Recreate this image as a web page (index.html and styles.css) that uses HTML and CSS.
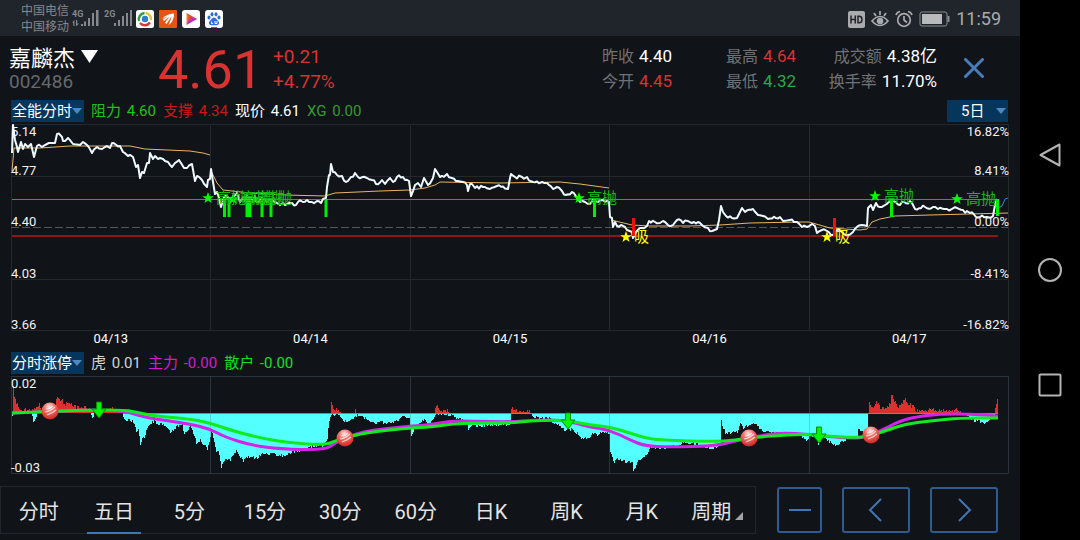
FILE: index.html
```html
<!DOCTYPE html>
<html lang="zh-CN">
<head>
<meta charset="utf-8">
<title>嘉麟杰 002486</title>
<link rel="stylesheet" href="styles.css">
</head>
<body>
<div class="device">
  <div class="app">
    <header class="status">
      <div class="carriers"><span>中国电信</span><span>中国移动</span></div>
      <svg class="signals" viewBox="0 0 60 22" aria-hidden="true">
        <g fill="#85888d">
          <text x="0" y="9" class="net">4G</text><text x="32" y="9" class="net">2G</text>
          <path d="M9 16h2v2H9zM12 13.500h2V18h-2zM16 10h2v8h-2zM20 5h2v13h-2zM24 2h2.500v16H24zM42 15h2v3h-2zM46 12h2v6h-2zM50 8h2v10h-2zM54 5h2v13h-2zM58 2h2v16h-2z"/>
          <path d="M0 14.500 2.500 12v6H1.300v-3.500zM4 12h1.200v3.500H7L4.500 18H4z"/>
        </g>
      </svg>
      <div class="tray">
        <svg class="tile" viewBox="0 0 18 18"><rect width="18" height="18" rx="2.500" fill="#fff"/><g fill="none" stroke-width="2.400"><path d="M3 11A6.300 6.300 0 0 1 8.500 3" stroke="#2f9a42"/><path d="M9.500 3a6.300 6.300 0 0 1 5.500 7" stroke="#e9c22c"/><path d="M14 12.500A6.300 6.300 0 0 1 4 13" stroke="#d53a3a"/></g><circle cx="9" cy="9" r="3.200" fill="#2b80c8"/></svg>
        <svg class="tile" viewBox="0 0 18 18"><rect width="18" height="18" rx="1" fill="#e85413"/><path d="M3 9Q7 4 15 3.500Q15.500 8 12 13L9.500 15Q12 10 12.500 6.500L7.500 14 6 12.500 10.500 6.500 5 11 4 9.500 9 6z" fill="#fff"/></svg>
        <svg class="tile" viewBox="0 0 18 18"><rect width="18" height="18" rx="3" fill="#fff"/><path d="M4.500 3 15 9 8 11.500z" fill="#f0442d"/><path d="M4.500 3 9 9.500 4.500 15z" fill="#ec7d24"/><path d="M4.500 15 8 7l7 2z" fill="#b22bd1"/><path d="M6 7l4.500 2L7 11z" fill="#f0442d"/></svg>
        <svg class="tile" viewBox="0 0 18 18"><rect width="18" height="18" rx="3" fill="#fff"/><g fill="#2d6be0"><ellipse cx="4" cy="7.500" rx="1.500" ry="2"/><ellipse cx="7" cy="4.300" rx="1.500" ry="2.100"/><ellipse cx="11" cy="4.300" rx="1.500" ry="2.100"/><ellipse cx="14" cy="7.500" rx="1.500" ry="2"/><path d="M9 7.500c2 0 3 2.500 4.500 3.800 1.200 1.700.3 3.900-1.700 3.900H6.200c-2 0-2.900-2.200-1.700-3.900C6 10 7 7.500 9 7.500z"/></g><path d="M6.500 11.500v2h1.500M10 11v2.500h2V11" fill="none" stroke="#fff"/><path d="M6 17h6v1H6z" fill="#d33"/></svg>
      </div>
      <div class="system">
        <svg class="hd" viewBox="0 0 17 17"><rect width="17" height="17" rx="2" fill="#a9abae"/><path d="M3 4.500v8M7.300 4.500v8M3 8.500h4.300M10 5.200v6.600h1.300c3.600 0 3.600-6.600 0-6.600z" fill="none" stroke="#20242b" stroke-width="1.500"/></svg>
        <svg class="eye" viewBox="0 0 18 18" fill="none" stroke="#a9abae" stroke-width="1.700"><path d="M1 11q8-9 16 0q-8 9-16 0zM9 1v4M3 3l2 3M15 3l-2 3"/><circle cx="9" cy="11" r="2.500" fill="#a9abae"/></svg>
        <svg class="alarm" viewBox="0 0 18 18" fill="none" stroke="#a9abae" stroke-width="1.700"><circle cx="9" cy="10" r="6.300"/><path d="M9 6v4l3 2.500M1 5q1-3 4-3.500M17 5q-1-3-4-3.500"/></svg>
        <svg class="battery" viewBox="0 0 32 16"><rect x="1" y="1" width="27" height="14" rx="2" fill="none" stroke="#8a8c90"/><rect x="3" y="3" width="20" height="10" fill="#b9babc"/><path d="M29.500 5v6" stroke="#8a8c90" stroke-width="2"/></svg>
        <time>11:59</time>
      </div>
    </header>

    <section class="quote">
      <div class="stock">
        <h1>嘉麟杰 <svg viewBox="0 0 17 13" aria-hidden="true"><path d="M0 0h17L8.500 13z" fill="#fff"/></svg></h1>
        <p>002486</p>
      </div>
      <strong class="price">4.61</strong>
      <div class="change"><span>+0.21</span><span>+4.77%</span></div>
      <dl class="stats">
        <div><dt>昨收</dt><dd>4.40</dd></div>
        <div><dt>最高</dt><dd class="up">4.64</dd></div>
        <div><dt>成交额</dt><dd>4.38亿</dd></div>
        <div><dt>今开</dt><dd class="up">4.45</dd></div>
        <div><dt>最低</dt><dd class="down">4.32</dd></div>
        <div><dt>换手率</dt><dd>11.70%</dd></div>
      </dl>
      <button class="close" aria-label="关闭"><svg viewBox="0 0 20 20"><path d="M1.500 1.500l17 17M18.500 1.500l-17 17" stroke="#477dbb" stroke-width="3" stroke-linecap="round"/></svg></button>
    </section>

    <div class="legend">
      <label class="picker"><select aria-label="主图指标"><option>全能分时</option></select><svg viewBox="0 0 10 6"><path d="M0 0h10L5 6z"/></svg></label>
      <span class="lime">阻力 <b>4.60</b></span><span class="red">支撑 <b>4.34</b></span><span class="white">现价 <b>4.61</b></span><span class="olive">XG <b>0.00</b></span>
      <label class="picker days"><select aria-label="天数"><option>5日</option></select><svg viewBox="0 0 10 6"><path d="M0 0h10L5 6z"/></svg></label>
    </div>

    <svg class="chart" viewBox="10 123 1000 209" role="img" aria-label="五日分时走势">
      <defs>
        <path id="star" d="M0-6 1.500-1.800H5.800L2.300 .8 3.600 5 0 2.400-3.600 5-2.300 .8-5.800-1.800H-1.500z"/>
      </defs>
      <path class="grid" d="M11.500 124.500h997v206h-997zM11.500 176.500h997M11.500 279.500h997M210.500 124.500v206M410.500 124.500v206M609.500 124.500v206M809.500 124.500v206"/>
      <path class="zero-dash" d="M11 227.500h997"/>
      <path class="resist" d="M12 199.500h986"/>
      <path class="support" d="M12 236h986"/>
      <g id="average"></g>
      <path id="price" class="price-line"/>
      <path class="tail" d="M998 208l4-2 3-7 3-1"/>
      <path class="sell-bars" d="M224.500 199v18M229 199v18M247 199v18M250 199v18M262 199v18M271 199v18M326 199v18M594.500 199v18M891.500 199v18M997.500 199v17"/>
      <path class="buy-bars" d="M633.500 218v18M834.500 218v18"/>
      <g class="sell">
        <use href="#star" x="208" y="198"/><use href="#star" x="233" y="199"/><use href="#star" x="247" y="198"/><use href="#star" x="255" y="199"/><use href="#star" x="579" y="198"/><use href="#star" x="875" y="196"/><use href="#star" x="957" y="199"/>
        <text x="216" y="203">高抛</text><text x="241" y="203">高抛</text><text x="255" y="203">高抛</text><text x="262" y="203">高抛</text>
        <text x="587" y="203">高抛</text><text x="884" y="201">高抛</text><text x="966" y="204">高抛</text>
      </g>
      <g class="buy">
        <use href="#star" x="626" y="237"/><use href="#star" x="827" y="237"/>
        <text x="634" y="242">吸</text><text x="835" y="242">吸</text>
      </g>
      <g class="axis">
        <text x="11" y="136">5.14</text><text x="11" y="175">4.77</text><text x="11" y="226">4.40</text><text x="11" y="278">4.03</text><text x="11" y="329">3.66</text>
        <g text-anchor="end"><text x="1009" y="136">16.82%</text><text x="1009" y="175">8.41%</text><text x="1009" y="226">0.00%</text><text x="1009" y="278">-8.41%</text><text x="1009" y="329">-16.82%</text></g>
      </g>
    </svg>
    <div class="dates"><span>04/13</span><span>04/14</span><span>04/15</span><span>04/16</span><span>04/17</span></div>

    <div class="legend second">
      <label class="picker"><select aria-label="副图指标"><option>分时涨停</option></select><svg viewBox="0 0 10 6"><path d="M0 0h10L5 6z"/></svg></label>
      <span class="pale">虎 <b>0.01</b></span><span class="magenta">主力 <b>-0.00</b></span><span class="bright">散户 <b>-0.00</b></span>
    </div>

    <svg class="chart" viewBox="10 375 1000 100" role="img" aria-label="分时涨停指标">
      <defs>
        <radialGradient id="ball" cx=".45" cy=".25" r=".75"><stop offset="0" stop-color="#ffe4de"/><stop offset=".4" stop-color="#ee736b"/><stop offset="1" stop-color="#d4211c"/></radialGradient>
        <g id="marker"><circle r="8.500" fill="url(#ball)"/><path d="M-5 1Q1 0 5-4M-3 4Q3 2 6-1M-4-2Q0-2 3-5" fill="none" stroke="#fff" stroke-width="1.200" opacity=".7"/></g>
        <path id="arrow" d="M-2.500-8h5v7H7L0 8-7-1h4.500z" fill="#00f500" stroke="#0a8a0a"/>
      </defs>
      <path id="outflow" fill="#54ffff"/>
      <path id="inflow" fill="#dc302e"/>
      <path class="grid over" d="M11.500 376.500h997v97h-997zM210.500 376.500v97M410.500 376.500v97M609.500 376.500v97M809.500 376.500v97"/>
      <path d="M123 413.500h875" stroke="#39a5a9"/>
      <path id="main-force" class="curve force"/>
      <path id="retail" class="curve retail"/>
      <use href="#marker" x="50" y="411"/><use href="#marker" x="345" y="438"/><use href="#marker" x="749" y="438"/><use href="#marker" x="871" y="435"/>
      <use href="#arrow" x="99" y="410"/><use href="#arrow" x="568" y="421"/><use href="#arrow" x="819" y="435"/>
      <g class="axis"><text x="11" y="388">0.02</text><text x="11" y="472">-0.03</text></g>
    </svg>

    <footer class="toolbar">
      <nav class="periods">
        <button>分时</button><button class="active">五日</button><button>5分</button><button>15分</button><button>30分</button><button>60分</button><button>日K</button><button>周K</button><button>月K</button><button>周期<svg viewBox="0 0 8 8" aria-hidden="true"><path d="M8 0v8H0z" fill="#a0a2a5"/></svg></button>
      </nav>
      <button class="tool small" aria-label="缩小"><svg viewBox="0 0 24 24"><path d="M1 12h22"/></svg></button>
      <button class="tool" aria-label="向前"><svg viewBox="0 0 24 24"><path d="M17 1 6 12l11 11"/></svg></button>
      <button class="tool" aria-label="向后"><svg viewBox="0 0 24 24"><path d="M7 1l11 11L7 23"/></svg></button>
    </footer>
  </div>

  <nav class="system-nav">
    <button aria-label="返回"><svg viewBox="0 0 26 26"><path d="M22.500 2.500v21L3.500 13z"/></svg></button>
    <button aria-label="主屏幕"><svg viewBox="0 0 26 26"><circle cx="13" cy="13" r="11"/></svg></button>
    <button aria-label="最近任务"><svg viewBox="0 0 26 26"><rect x="2.500" y="2.500" width="21" height="21" rx="1"/></svg></button>
  </nav>
</div>
<script src="chart.js"></script>
</body>
</html>
```
FILE: styles.css
```css
* { box-sizing: border-box; }
body {
  margin: 0;
  background: #000;
  color: #fff;
  font-family: Roboto, "Noto Sans CJK SC", sans-serif;
}
button, select { font: inherit; color: inherit; background: none; border: 0; padding: 0; margin: 0; }
svg { display: block; }
h1, p, dl, dd { margin: 0; }

.device { display: grid; grid-template-columns: 1fr 60px; min-height: 100vh; }
.app { background: #101318; display: flex; flex-direction: column; min-width: 0; }

.status { display: flex; align-items: center; height: 36px; background: #20242b; padding: 2px 19px 0 21px; color: #a9abae; }
.carriers { display: flex; flex-direction: column; font-size: 12px; line-height: 16px; color: #85888d; }
.signals { width: 60px; height: 22px; margin: 0 4px 0 3px; }
.net { font: 700 9px Roboto, sans-serif; }
.tray { display: flex; gap: 5px; }
.tile { width: 18px; height: 18px; }
.system { display: flex; align-items: center; gap: 6px; margin-left: auto; font-size: 18px; line-height: 20px; }
.hd { width: 17px; height: 17px; }
.eye, .alarm { width: 18px; height: 18px; }
.battery { width: 32px; height: 16px; }
.system time { margin-left: -1px; }

.quote { display: flex; align-items: center; height: 63px; padding: 0 36px 0 9px; }
.stock { width: 149px; }
.stock h1 { display: flex; align-items: center; gap: 6px; font-size: 22px; line-height: 26px; font-weight: 400; padding-top: 2px; }
.stock h1 svg { width: 17px; height: 13px; margin-bottom: 4px; }
.stock p { font-size: 19px; line-height: 20px; color: #66686c; }
.price { width: 115px; font-size: 54px; line-height: 60px; font-weight: 400; color: #da3230; padding-top: 5px; }
.change { display: flex; flex-direction: column; font-size: 19px; line-height: 25px; color: #da3230; padding-top: 3px; }
.stats { display: grid; grid-template-columns: 100px 78px 109px; column-gap: 24px; margin-left: auto; padding-top: 3px; }
.stats div { display: flex; gap: 5px; line-height: 25px; white-space: nowrap; }
.stats div:nth-child(3n) { justify-content: flex-end; }
.stats dt { font-size: 16px; color: #707276; }
.stats dd { font-size: 17px; }
.stats .up { color: #da3230; }
.stats .down { color: #2da54e; }
.close { margin-left: 27px; }
.close svg { width: 20px; height: 20px; }

.legend { display: flex; align-items: center; gap: 7px; height: 22px; margin: 1px 12px 1px 11px; font-size: 15px; line-height: 22px; }
.legend span { white-space: nowrap; }
.legend b { font-weight: 400; margin-left: 2px; }
.picker { position: relative; display: block; width: 73px; height: 22px; background: #07365c; }
.picker select { appearance: none; width: 100%; height: 22px; padding-left: 1px; line-height: 22px; color: #fff; }
.picker svg { position: absolute; right: 2px; top: 8px; width: 10px; height: 6px; fill: #4f87c0; pointer-events: none; }
.days { width: 61px; margin-left: auto; }
.days select { padding-left: 14px; }
.lime { color: #16c616; }
.red { color: #d01616; }
.olive { color: #359b2c; }
.pale { color: #d6d6d6; }
.magenta { color: #d41ad4; }
.bright { color: #10e020; }

.chart { width: calc(100% - 20px); margin: 0 10px; overflow: visible; }
.grid { fill: none; stroke: #24272c; stroke-width: 1; }
.over { stroke: #60718055; }
.zero-dash { stroke: #54575c; stroke-dasharray: 8 3; }
.resist { stroke: #12b812; stroke-width: 1; }
.support { stroke: #8f151b; stroke-width: 2; }
.average { fill: none; stroke: #e6b566; stroke-width: 1; }
.price-line { fill: none; stroke: #eefaff; stroke-width: 2; stroke-linejoin: round; }
.tail { fill: none; stroke: #2b8cc4; stroke-width: 1; }
.sell-bars { stroke: #00f000; stroke-width: 3; }
.buy-bars { stroke: #f01010; stroke-width: 3; }
.sell { fill: #00ff00; }
.sell text { fill: #16ba16; font-size: 15px; }
.buy { fill: #ffff00; font-size: 15px; }
.axis { fill: #f2f2f2; font-size: 13px; }
.curve { fill: none; stroke-width: 3; stroke-linejoin: round; }
.force { stroke: #d522e8; }
.retail { stroke: #10eb20; }

.dates { display: grid; grid-template-columns: repeat(5, 1fr); margin: 0 11px; text-align: center; font-size: 13px; line-height: 14px; }
.second { margin-top: 6px; }

.toolbar { display: flex; align-items: center; margin-top: 11px; padding-right: 22px; }
.periods { flex: 1; display: grid; grid-template-columns: repeat(10, 1fr); height: 48px; margin-right: 21px; border: 1px solid #23262e; }
.periods button { position: relative; display: flex; align-items: center; justify-content: center; padding-top: 3px; font-size: 20px; line-height: 42px; color: #e4e4e4; white-space: nowrap; }
.periods .active::after { content: ""; position: absolute; left: 11px; right: 11px; bottom: -1px; height: 2px; background: #3c78b8; }
.periods svg { width: 8px; height: 8px; margin: 8px 0 0 4px; }
.tool { display: grid; place-items: center; width: 68px; height: 46px; border: 2px solid #2e5b90; border-radius: 3px; }
.tool + .tool { margin-left: 20px; }
.tool svg { width: 24px; height: 24px; fill: none; stroke: #3f76b4; stroke-width: 2; }
.small { width: 45px; }

.system-nav { display: flex; flex-direction: column; align-items: center; justify-content: center; gap: 89px; background: #000; }
.system-nav svg { width: 26px; height: 26px; fill: none; stroke: #b4b4b4; stroke-width: 2; stroke-linejoin: round; }
```
FILE: chart.js
```js
const pairs = (text) => text.trim().split(/\s+/).map((p) => p.split(",").map(Number));
const line = (points) => "M" + points.map((p) => p.join(" ")).join("L");

let seed = 11;
const noise = () => {
  seed = (seed * 16807) % 2147483647;
  return seed / 2147483647 - 0.5;
};

const valueAt = (points, x) => {
  for (let i = 1; i < points.length; i++) {
    const [x0, y0] = points[i - 1];
    const [x1, y1] = points[i];
    if (x <= x1) return y0 + ((y1 - y0) * (x - x0)) / (x1 - x0 || 1);
  }
  return points[points.length - 1][1];
};

// Adds small ticks between widely spaced price samples.
const ticks = (points) => {
  const out = [];
  points.forEach((p, i) => {
    out.push(p);
    const next = points[i + 1];
    if (!next) return;
    const span = next[0] - p[0];
    for (let x = 2; x < span - 1; x += 2) {
      out.push([p[0] + x, +(p[1] + ((next[1] - p[1]) * x) / span + noise() * 3.5).toFixed(1)]);
    }
  });
  return out;
};

// Quadratic smoothing through the midpoints of the samples.
const smooth = (points) => {
  let d = "M" + points[0].join(" ");
  for (let i = 1; i < points.length - 1; i++) {
    const [x, y] = points[i];
    const [nx, ny] = points[i + 1];
    d += `Q${x} ${y} ${(x + nx) / 2} ${(y + ny) / 2}`;
  }
  return d + "L" + points[points.length - 1].join(" ");
};

const ZERO = 413;
const bars = (points, dir, jitter) => {
  let d = "";
  for (let x = points[0][0]; x < points[points.length - 1][0]; x++) {
    const h = (valueAt(points, x) - ZERO) * dir;
    if (h < 0.8) continue;
    const tall = Math.max(1, Math.round(h + noise() * jitter));
    d += dir > 0 ? `M${x} ${ZERO}h1v${tall}h-1z` : `M${x} ${ZERO}h1v${-tall}h-1z`;
  }
  return d;
};

const price = pairs(`12,153 13,125 15,140 17,147 18,152 21,142 23,149 25,144 28,147 31,144 34,157 37,146 42,147 47,144 52,143 55,143 57,134 62,137 63,141 68,138 73,144 80,145 83,142 87,145 92,153 97,147 102,149 105,147 110,148 112,143 120,146 123,152 128,156 133,157 136,167 138,165 140,178 142,172 144,173 147,163 149,163 150,153 153,159 155,156 158,159 163,159 168,162 172,167 175,163 179,160 184,168 187,168 192,164 195,181 197,176 202,180 207,187 208,180 210,179 211,169 213,182 215,194 217,192 219,198 221,207 224,197 230,199 233,197 237,193 240,202 243,198 247,200 252,199 257,202 262,198 267,202 272,200 277,203 280,205 283,203 287,204 292,203 296,205 298,202 303,202 307,200 312,202 317,201 321,203 323,199 326,198 327,187 329,175 330,175 331,164 333,172 337,175 342,176 346,182 351,177 355,173 358,177 367,178 372,180 376,184 382,180 385,184 390,178 393,182 397,177 403,177 409,181 411,196 415,185 418,183 421,187 424,178 428,185 433,178 435,169 437,172 440,177 447,174 452,178 458,181 463,182 467,185 468,191 470,184 475,188 483,187 490,189 497,186 508,189 510,178 511,174 515,177 522,177 527,177 533,182 542,182 547,183 553,189 557,187 562,191 566,195 572,192 577,198 580,202 585,202 588,204 593,200 598,202 603,200 609,202 610,217 612,218 613,227 615,222 617,226 621,225 625,227 627,230 632,232 633,238 636,232 642,228 647,226 649,221 655,222 660,223 663,221 668,225 673,225 677,220 683,223 688,221 692,223 698,222 703,226 708,228 712,231 717,229 719,220 721,206 723,212 726,216 732,218 737,218 742,208 745,212 753,209 758,215 763,216 768,219 780,217 783,221 790,220 797,222 802,227 807,227 812,224 815,226 817,233 822,230 827,231 833,235 837,230 842,232 848,235 853,232 858,226 867,226 868,208 871,205 873,210 876,203 880,207 885,205 892,200 900,205 904,202 912,203 915,209 925,207 933,207 938,209 947,209 957,208 963,210 970,213 980,217 987,217 993,216 995,205 997,199`);
document.getElementById("price").setAttribute("d", line(ticks(price)));

const averages = [
  "12,171 14,148 40,148 70,146 130,146 145,149 190,151 203,153 210,155",
  "211,171 217,183 223,190 250,193 285,195 325,196 335,193 380,191 410,190 425,188 435,185 440,182 500,183 560,182 580,184 609,188",
  "611,220 632,225 650,226 690,226 720,225 750,223 800,222 809,222 830,228 860,230 867,229 872,222 880,219 895,216 930,215 1008,213",
];
averages.forEach((text) => {
  const path = document.createElementNS("http://www.w3.org/2000/svg", "path");
  path.setAttribute("class", "average");
  path.setAttribute("d", line(pairs(text)));
  document.getElementById("average").append(path);
});

const outflow = pairs(`12,416 14,413 31,413 33,421 35,420 37,413 90,413 92,418 94,413 122,413 123,418 126,420 130,420 134,423 136,432 138,430 140,445 142,437 144,437 147,427 150,423 154,421 158,424 165,426 171,433 176,426 182,425 184,434 190,427 194,435 196,444 200,440 207,449 210,437 211,430 213,437 216,452 218,450 221,467 225,458 230,460 236,450 240,457 243,461 247,457 252,457 257,459 262,453 270,454 282,456 290,453 300,450 307,448 315,445 323,446 327,438 328,427 330,417 332,414 338,415 347,423 353,418 358,415 367,419 375,423 380,422 390,423 397,420 403,416 409,419 411,437 415,427 420,423 423,420 428,423 432,420 435,414 440,414 450,415 457,418 467,422 468,430 470,426 493,425 510,424 511,413 530,413 533,417 550,418 553,423 562,427 565,431 568,428 577,433 580,438 588,439 593,433 597,435 603,432 609,433 610,452 614,463 617,458 625,462 632,462 633,472 637,462 643,457 647,455 649,448 663,448 680,446 682,443 698,444 700,447 713,449 720,445 721,420 722,425 725,433 737,432 740,423 743,428 753,422 758,427 765,432 797,433 800,437 807,440 810,435 817,438 818,445 822,438 830,442 835,446 842,442 847,438 857,438 858,430 867,432 868,413 965,413 970,419 985,423 990,420 995,415 998,413`);
document.getElementById("outflow").setAttribute("d", bars(outflow, 1, 3));

const inflow = pairs(`12,413 13,385 14,398 16,402 18,407 22,410 30,410 38,407 39,405 40,410 55,410 56,398 58,397 62,401 65,405 68,401 72,405 78,408 85,407 90,411 100,411 110,409 115,408 120,411 123,413 330,413 331,401 333,408 337,411 342,413 354,413 355,410 356,413 434,413 436,405 438,408 441,412 447,410 449,413 510,413 511,407 513,411 520,412 529,411 530,413 868,413 869,403 873,407 876,402 880,408 887,407 890,403 891,394 894,400 898,407 902,403 905,400 908,404 913,407 916,411 925,411 932,408 936,411 950,411 957,410 962,413 994,413 996,404 997,398 998,398`);
document.getElementById("inflow").setAttribute("d", bars(inflow, -1, 4));

const retail = pairs(`12,413 60,411 90,410 125,410 140,413 155,416 190,419 210,423 230,430 260,438 290,443 325,445 335,441 345,438 360,434 380,431 410,428 430,427 460,423 510,423 530,421 555,420 570,421 590,425 610,427 630,433 645,438 660,440 720,442 750,438 770,436 805,434 825,436 860,438 875,434 885,431 905,424 930,421 960,418 998,418`);
const force = pairs(`12,413 60,411 90,410 125,411 140,416 155,419 190,424 210,429 225,437 250,445 280,449 325,450 335,443 345,438 365,431 385,429 410,426 430,425 450,421 470,421 510,422 535,420 560,420 575,423 590,427 610,430 630,440 645,446 670,447 715,446 735,441 750,438 770,434 785,433 805,434 825,436 845,438 862,438 880,431 900,421 915,417 940,414 970,414 998,416`);
document.getElementById("retail").setAttribute("d", smooth(retail));
document.getElementById("main-force").setAttribute("d", smooth(force));
```
